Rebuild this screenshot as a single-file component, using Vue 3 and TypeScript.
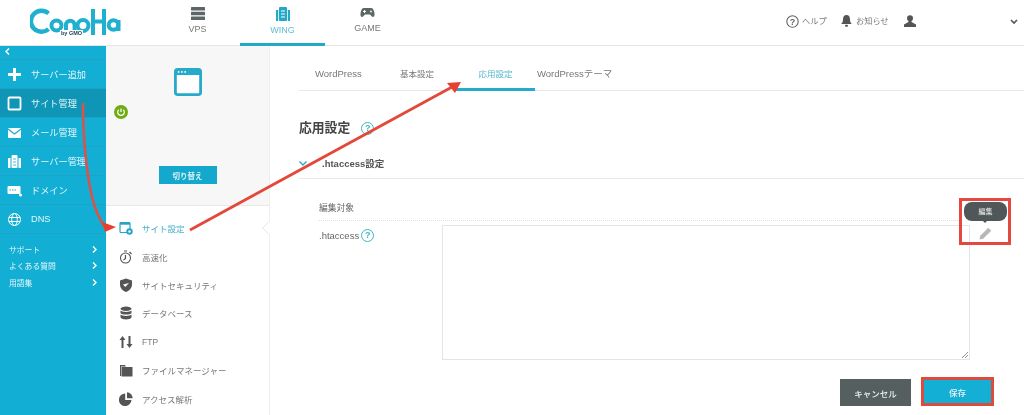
<script setup lang="ts">
const sideItems = [
  { label: 'サーバー追加', icon: 'plus' },
  { label: 'サイト管理', icon: 'square', active: true },
  { label: 'メール管理', icon: 'mail' },
  { label: 'サーバー管理', icon: 'server' },
  { label: 'ドメイン', icon: 'domain' },
  { label: 'DNS', icon: 'globe' },
]
const links = ['サポート', 'よくある質問', '用語集']
const subItems = [
  { label: 'サイト設定', icon: 'site', active: true },
  { label: '高速化', icon: 'timer' },
  { label: 'サイトセキュリティ', icon: 'shield' },
  { label: 'データベース', icon: 'db' },
  { label: 'FTP', icon: 'ftp' },
  { label: 'ファイルマネージャー', icon: 'folder' },
  { label: 'アクセス解析', icon: 'pie' },
]
const tabs = [
  { label: 'WordPress', cls: 't1' },
  { label: '基本設定', cls: 't2' },
  { label: '応用設定', cls: 't3 on' },
  { label: 'WordPressテーマ', cls: 't4' },
]
</script>

<template>
  <div class="page">
    <header class="top">
      <div class="logo">
        <svg width="92" height="30" viewBox="0 0 92 30" fill="none" stroke="#1fb0d0" stroke-width="4">
          <path d="M18.500 7.500A10.500 10.500 0 1 0 18.500 23" stroke-width="4.400" />
          <circle cx="26.500" cy="19.500" r="5" />
          <path d="M36 27V19a4.300 4.300 0 0 1 8.600 0v8" />
          <circle cx="53" cy="19.500" r="5.500" />
          <path d="M63 3V29M74 3V29M63 15.500H74" />
          <circle cx="83.500" cy="19" r="4.800" />
          <path d="M88.500 14V25" />
        </svg>
        <span class="gmo">by GMO</span>
      </div>
      <nav class="nav">
        <a class="nav-item">
          <svg width="14" height="13" viewBox="0 0 14 13" fill="#5d6567"><rect width="14" height="3.600" rx=".5" /><rect y="4.700" width="14" height="3.600" rx=".5" /><rect y="9.400" width="14" height="3.600" rx=".5" /></svg>
          <span>VPS</span>
        </a>
        <a class="nav-item on">
          <svg width="14" height="14" viewBox="0 0 14 14" fill="#22a9c8"><rect x="3" y="0" width="8" height="14" rx="1" /><rect x="0" y="3" width="2.200" height="11" /><rect x="11.800" y="3" width="2.200" height="11" /><path d="M5 4h4M5 7h4M5 10h4" stroke="#fff" stroke-width="1" /></svg>
          <span>WING</span>
        </a>
        <a class="nav-item">
          <svg width="15" height="12" viewBox="0 0 15 12" fill="#5d6567"><path d="M4 1h7c2 0 3 2 3.500 5.500.4 3-1.500 4.500-3 2.500L10 7.500H5L3.500 9c-1.500 2-3.400.5-3-2.500C1 3 2 1 4 1z" /><circle cx="11" cy="4.500" r=".9" fill="#fff" /><path d="M3 4.500h3M4.500 3v3" stroke="#fff" /></svg>
          <span>GAME</span>
        </a>
      </nav>
      <div class="util">
        <svg class="u1" width="13" height="13" viewBox="0 0 13 13"><circle cx="6.500" cy="6.500" r="5.700" fill="none" stroke="#666" stroke-width="1.100" /><text x="6.500" y="9.700" font-size="9" text-anchor="middle" fill="#666" font-family="Liberation Sans" font-weight="700">?</text></svg>
        <span class="u2">ヘルプ</span>
        <svg class="u3" width="11" height="12" viewBox="0 0 11 12" fill="#555"><path d="M5.500 0c2.500 0 3.500 2 3.500 4.500 0 2 .7 3.500 2 4.500H0c1.300-1 2-2.500 2-4.500C2 2 3 0 5.500 0z" /><rect x="4" y="9.700" width="3" height="2" rx="1" /></svg>
        <span class="u4">お知らせ</span>
        <svg class="u5" width="12" height="12" viewBox="0 0 12 12" fill="#555"><circle cx="6" cy="3.200" r="3" /><path d="M4.500 5.500h3v1.500L12 9.500V12H0V9.500L4.500 7z" /></svg>
        <svg class="u6" width="8" height="6" viewBox="0 0 8 6" fill="none" stroke="#555" stroke-width="1.600"><path d="M1 1l3 3 3-3" /></svg>
      </div>
    </header>

    <div class="body">
      <aside class="side">
        <div class="back">
          <svg width="5" height="7" viewBox="0 0 5 7" fill="none" stroke="#fff" stroke-width="1.500"><path d="M4 .5L1 3.500l3 3" /></svg>
        </div>
        <a v-for="it in sideItems" :key="it.label" class="side-item" :class="{ active: it.active }">
          <span class="side-ico">
            <svg width="15" height="15" viewBox="0 0 15 15" fill="#fff">
              <path v-if="it.icon === 'plus'" d="M6 1h3v5h5v3H9v5H6V9H1V6h5z" />
              <rect v-else-if="it.icon === 'square'" x="1.500" y="1.500" width="12" height="12" rx="1" fill="none" stroke="#fff" stroke-width="1.800" />
              <g v-else-if="it.icon === 'mail'"><rect x="1" y="3" width="13" height="10" rx="1" /><path d="M1 4l6.500 5L14 4" fill="none" stroke="#12aed4" stroke-width="1.200" /></g>
              <g v-else-if="it.icon === 'server'"><rect x="4.500" y="1" width="6" height="13" rx="1" /><rect x="1" y="4" width="2.500" height="10" /><rect x="11.500" y="4" width="2.500" height="10" /><path d="M6 5h3M6 8h3M6 11h3" stroke="#12aed4" stroke-width=".8" /></g>
              <g v-else-if="it.icon === 'domain'"><rect x="0.500" y="3" width="13" height="8" rx="1" /><path d="M2.500 7h7" stroke="#12aed4" stroke-width="1.200" stroke-dasharray="1.500 1" /><circle cx="13.500" cy="12" r="1.500" /></g>
              <g v-else fill="none" stroke="#fff" stroke-width="1"><circle cx="7.500" cy="7.500" r="6" /><ellipse cx="7.500" cy="7.500" rx="2.800" ry="6" /><path d="M2 5.500h11M2 9.500h11" /></g>
            </svg>
          </span>
          <span>{{ it.label }}</span>
        </a>
        <ul class="links">
          <li v-for="l in links" :key="l">
            <span>{{ l }}</span>
            <svg width="5" height="7" viewBox="0 0 5 7" fill="none" stroke="#fff" stroke-width="1.400"><path d="M1 .5l3 3-3 3" /></svg>
          </li>
        </ul>
      </aside>

      <section class="sub">
        <div class="sub-top">
          <svg class="win" width="28" height="28" viewBox="0 0 30 30">
            <rect x="1.500" y="1.500" width="27" height="27" rx="2.500" fill="#fff" stroke="#27a9c9" stroke-width="3" />
            <rect x="1" y="1" width="28" height="6.500" rx="2" fill="#27a9c9" />
            <g fill="#fff"><circle cx="5" cy="4.200" r="1" /><circle cx="8.500" cy="4.200" r="1" /><circle cx="12" cy="4.200" r="1" /></g>
          </svg>
          <svg class="power" width="14" height="14" viewBox="0 0 14 14">
            <circle cx="7" cy="7" r="7" fill="#6fac13" />
            <path d="M4.700 4.800a3.300 3.300 0 1 0 4.600 0M7 3.500v3.500" fill="none" stroke="#fff" stroke-width="1.200" />
          </svg>
          <button class="switch">切り替え</button>
        </div>
        <ul class="sub-list">
          <li v-for="s in subItems" :key="s.label" :class="{ active: s.active }">
            <span class="sub-ico">
              <svg width="14" height="14" viewBox="0 0 14 14" fill="#555">
                <g v-if="s.icon === 'site'"><rect x="1" y="1.500" width="10" height="10" rx="1" fill="none" stroke="#24a5c5" stroke-width="1.200" /><rect x="1" y="1.500" width="10" height="2.200" fill="#24a5c5" /><circle cx="10.500" cy="10.500" r="3.200" fill="#24a5c5" /><circle cx="10.500" cy="10.500" r="1.200" fill="#fff" /></g>
                <g v-else-if="s.icon === 'timer'"><circle cx="6.500" cy="8" r="5" fill="none" stroke="#555" stroke-width="1.100" /><path d="M6.500 5v3.500l-2 1.500M5 1h3M10.500 2l2 2" fill="none" stroke="#555" stroke-width="1.200" /></g>
                <path v-else-if="s.icon === 'shield'" d="M7 .5l6 2v4c0 3.500-2.500 6-6 7.500-3.500-1.500-6-4-6-7.500v-4zM4 6.500L6.300 9l3.700-4" fill-rule="evenodd" />
                <g v-else-if="s.icon === 'db'"><ellipse cx="7" cy="2.700" rx="5.500" ry="2.200" /><path d="M1.500 4.500c1 1.900 10 1.900 11 0V7c-1 2-10 2-11 0zM1.500 8.500c1 1.900 10 1.900 11 0v3c-1 2.600-10 2.600-11 0z" /></g>
                <g v-else-if="s.icon === 'ftp'"><path d="M3.500 1L6.500 5H4.500v8h-2V5H.5zM10.500 13L7.500 9h2V1h2v8h2z" /></g>
                <g v-else-if="s.icon === 'folder'"><path d="M1 2h5l1 1.500H2V13H1z" /><rect x="2.500" y="4" width="11" height="9.500" rx=".6" /></g>
                <g v-else><path d="M6.200 1.500v6.500h6.300a6.300 6.300 0 1 1-6.300-6.500z" /><path d="M8 .3a6 6 0 0 1 5.700 6H8z" /></g>
              </svg>
            </span>
            <span>{{ s.label }}</span>
          </li>
        </ul>
        <i class="notch"></i>
      </section>

      <main class="main">
        <div class="tabs">
          <a v-for="t in tabs" :key="t.label" class="tab" :class="t.cls">{{ t.label }}</a>
        </div>
        <div class="title-row">
          <h2>応用設定</h2>
          <span class="q big">?</span>
        </div>
        <div class="acc">
          <svg width="8" height="5" viewBox="0 0 8 5" fill="none" stroke="#27a9c9" stroke-width="1.400"><path d="M.5 .5L4 4 7.500 .5" /></svg>
          <span>.htaccess設定</span>
        </div>
        <div class="row-target">編集対象</div>
        <div class="row-file">
          <div class="file-label"><span>.htaccess</span><span class="q">?</span></div>
          <div class="area">
            <svg class="grip" width="7" height="7" viewBox="0 0 7 7" stroke="#777" stroke-width=".8"><path d="M1 7L7 1M4 7l3-3" /></svg>
          </div>
        </div>
        <div class="actions">
          <button class="btn cancel">キャンセル</button>
          <button class="btn save">保存</button>
        </div>
        <div class="edit-box">
          <div class="tip">編集</div>
          <svg class="pencil" width="13" height="13" viewBox="0 0 14 14" fill="#b5b8b9"><path d="M10 .8l3.200 3.200L4.500 12.700 .5 13.500l.8-4z" /></svg>
        </div>
      </main>
    </div>

    <svg class="arrows" width="1024" height="415" viewBox="0 0 1024 415" fill="none">
      <path d="M83 103C83 135 85 165 92 197C95 210 99 218 104 226" stroke="#d9534a" stroke-width="2.600" />
      <path d="M102 222L116 227L105 232Z" fill="#e8402f" />
      <path d="M190 230L452 87" stroke="#e4483a" stroke-width="2.800" />
      <path d="M447 83L461 82L455 93Z" fill="#e8402f" />
    </svg>
  </div>
</template>

<style>
html, body { margin: 0; background: #fff; }
</style>

<style scoped>
* { box-sizing: border-box; }
.page {
  position: relative;
  width: 1024px;
  height: 415px;
  overflow: hidden;
  background: #fff;
  color: #666;
  font-family: "Liberation Sans", "Noto Sans CJK JP", sans-serif;
  filter: blur(0.45px);
}
.top {
  display: flex;
  height: 46px;
  border-bottom: 1px solid #e6e6e6;
}
.logo {
  position: relative;
  width: 155px;
  padding: 6px 0 0 30px;
}
.gmo {
  position: absolute;
  left: 60px;
  top: 30px;
  font: 700 5.500px/6px "Liberation Sans", sans-serif;
  color: #245;
  background: #fff;
  padding: 0 1px;
}
.nav { display: flex; }
.nav-item {
  display: flex;
  flex-direction: column;
  align-items: center;
  width: 85px;
  height: 46px;
  padding-top: 7px;
  font-size: 9px;
  color: #777;
}
.nav-item span { margin-top: 2px; line-height: 14px; }
.nav-item.on { color: #5fbdd3; border-bottom: 3px solid #20aac9; }
.util {
  position: relative;
  flex: 1;
  font-size: 8.200px;
  color: #777;
}
.util > * { position: absolute; }
.u1 { left: 376px; top: 15px; }
.u2 { left: 392px; top: 15px; line-height: 14px; }
.u3 { left: 431px; top: 15px; }
.u4 { left: 446px; top: 15px; line-height: 14px; }
.u5 { left: 494px; top: 15px; }
.u6 { left: 600px; top: 19px; }

.body { display: flex; height: 369px; }
.side {
  width: 106px;
  flex: none;
  background: #12aed4;
  color: #e6f6fb;
  font-size: 9.200px;
}
.back {
  height: 14px;
  padding: 1px 0 0 5px;
  line-height: 10px;
  border-bottom: 1px solid #25a2c0;
}
.side-item {
  display: flex;
  align-items: center;
  height: 29px;
  padding-left: 7px;
  border-bottom: 1px solid #1ba4c6;
}
.side-item.active { background: #0f95b5; }
.side-ico { width: 24px; display: flex; }
.links {
  list-style: none;
  margin: 7px 0 0;
  padding: 0 9px;
  font-size: 7.800px;
}
.links li {
  display: flex;
  align-items: center;
  justify-content: space-between;
  height: 16.500px;
}
.sub {
  position: relative;
  width: 164px;
  flex: none;
  border-right: 1px solid #efefef;
}
.sub-top {
  position: relative;
  display: flex;
  flex-direction: column;
  align-items: center;
  height: 160px;
  background: #f7f7f7;
  border-bottom: 1px solid #e8e8e8;
  padding-top: 22px;
}
.power { position: absolute; left: 8px; top: 59px; }
.switch {
  margin-top: 70px;
  width: 58px;
  height: 18px;
  border: 0;
  padding: 0;
  background: #14a9cc;
  color: #d8f1f7;
  font: 700 7.500px "Noto Sans CJK JP", sans-serif;
}
.sub-list {
  list-style: none;
  margin: 8px 0 0;
  padding: 0 0 0 13px;
  font-size: 8.500px;
  color: #777;
}
.sub-list li {
  display: flex;
  align-items: center;
  height: 28.400px;
}
.sub-list li.active { color: #45afc9; }
.sub-ico { width: 23px; display: flex; }
.notch {
  position: absolute;
  right: -5px;
  top: 177px;
  width: 10px;
  height: 10px;
  background: #fff;
  border-left: 1px solid #eee;
  border-bottom: 1px solid #eee;
  transform: rotate(45deg);
}

.main { position: relative; flex: 1; padding-left: 29px; min-width: 0; }
.tabs {
  position: relative;
  height: 45px;
  border-bottom: 1px solid #e8e8e8;
  font-size: 8.500px;
  color: #777;
}
.tab { position: absolute; top: 21px; line-height: 14px; }
.t1 { left: 16px; font-size: 9.500px; }
.t2 { left: 101px; }
.t3 { left: 157px; width: 79px; height: 24px; text-align: center; }
.t3.on { color: #52b8cf; border-bottom: 3px solid #27a9c9; }
.t4 { left: 238px; font-size: 9.500px; }
.title-row { display: flex; align-items: center; height: 24px; margin-top: 25px; }
h2 {
  margin: 0;
  font-size: 12.800px;
  font-weight: 700;
  color: #444;
  line-height: 24px;
}
.q {
  display: inline-flex;
  align-items: center;
  justify-content: center;
  width: 13px;
  height: 13px;
  border: 1.200px solid #3db7bd;
  border-radius: 50%;
  color: #3db7bd;
  font: 700 9px/1 "Liberation Sans", sans-serif;
}
.q.big { margin-left: 11px; }
.acc {
  display: flex;
  align-items: center;
  height: 31px;
  margin-top: 8px;
  border-bottom: 1px solid #e8e8e8;
  font-size: 9.500px;
  font-weight: 700;
  color: #555;
}
.acc svg { margin-right: 15px; }
.row-target {
  height: 42px;
  margin: 0 64px 0 20px;
  padding-top: 22px;
  border-bottom: 1px dotted #ddd;
  font-size: 8.750px;
  line-height: 14px;
  color: #666;
}
.row-file { display: flex; margin-left: 20px; padding-top: 4px; }
.file-label {
  display: flex;
  align-items: center;
  gap: 2px;
  width: 123px;
  height: 20px;
  font-size: 9.500px;
  color: #666;
}
.area {
  position: relative;
  width: 528px;
  height: 135px;
  border: 1px solid #e4e4e4;
  background: #fff;
}
.grip { position: absolute; right: 1px; bottom: 1px; }
.actions {
  display: flex;
  align-items: flex-end;
  gap: 10px;
  margin: 17px 0 0 541px;
}
.btn {
  border: 0;
  padding: 0;
  font: 500 8.500px "Noto Sans CJK JP", sans-serif;
  color: #e8f2f4;
}
.cancel { width: 71px; height: 27px; background: #555f60; }
.save { width: 73px; height: 29px; background: #14afd4; border: 3px solid #dd4a3e; }
.edit-box {
  position: absolute;
  left: 689px;
  top: 152px;
  width: 52px;
  height: 47px;
  border: 3px solid #e4483e;
}
.tip {
  position: absolute;
  left: 2px;
  top: 1px;
  width: 43px;
  height: 19px;
  border-radius: 8px;
  background: #505758;
  color: #e6e6e6;
  text-align: center;
  font: 500 7px/19px "Noto Sans CJK JP", sans-serif;
}
.tip::after {
  content: "";
  position: absolute;
  left: 18px;
  top: 18px;
  border: 3px solid transparent;
  border-top-color: #505758;
}
.pencil { position: absolute; left: 17px; top: 26px; }
.arrows { position: absolute; left: 0; top: 0; pointer-events: none; }
</style>
